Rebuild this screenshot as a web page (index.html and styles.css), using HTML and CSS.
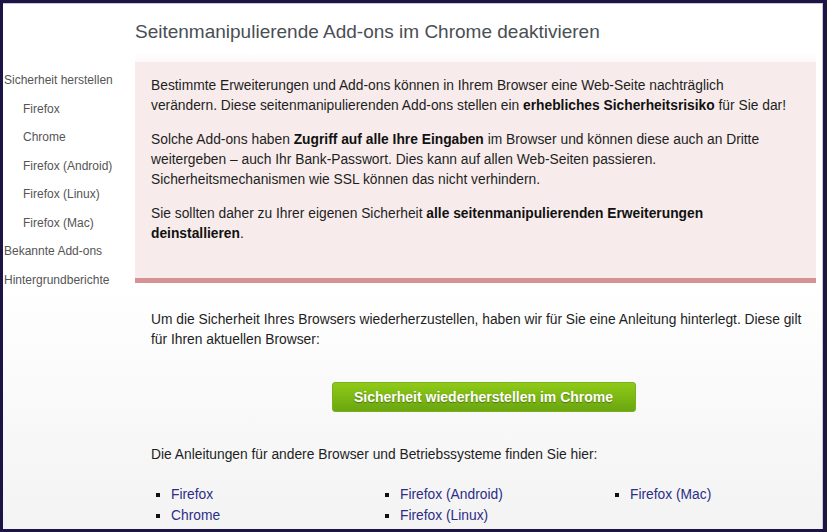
FILE: index.html
```html
<!DOCTYPE html>
<html lang="de">
<head>
<meta charset="utf-8">
<title>Seitenmanipulierende Add-ons im Chrome deaktivieren</title>
<link rel="stylesheet" href="styles.css">
</head>
<body>
<div class="frame">
  <nav class="sidebar">
    <a class="nav-item">Sicherheit herstellen</a>
    <a class="nav-item sub">Firefox</a>
    <a class="nav-item sub">Chrome</a>
    <a class="nav-item sub">Firefox (Android)</a>
    <a class="nav-item sub">Firefox (Linux)</a>
    <a class="nav-item sub">Firefox (Mac)</a>
    <a class="nav-item">Bekannte Add-ons</a>
    <a class="nav-item">Hintergrundberichte</a>
  </nav>
  <main class="main">
    <h1 class="title">Seitenmanipulierende Add-ons im Chrome deaktivieren</h1>
    <section class="warning">
      <p>Bestimmte Erweiterungen und Add-ons können in Ihrem Browser eine Web-Seite nachträglich verändern. Diese seitenmanipulierenden Add-ons stellen ein <b>erhebliches Sicherheitsrisiko</b> für Sie dar!</p>
      <p>Solche Add-ons haben <b>Zugriff auf alle Ihre Eingaben</b> im Browser und können diese auch an Dritte weitergeben – auch Ihr Bank-Passwort. Dies kann auf allen Web-Seiten passieren. Sicherheitsmechanismen wie SSL können das nicht verhindern.</p>
      <p>Sie sollten daher zu Ihrer eigenen Sicherheit <b>alle seitenmanipulierenden Erweiterungen deinstallieren</b>.</p>
    </section>
    <section class="restore">
      <p>Um die Sicherheit Ihres Browsers wiederherzustellen, haben wir für Sie eine Anleitung hinterlegt. Diese gilt für Ihren aktuellen Browser:</p>
      <div class="btn-row"><a class="btn">Sicherheit wiederherstellen im Chrome</a></div>
      <p class="others">Die Anleitungen für andere Browser und Betriebssysteme finden Sie hier:</p>
      <ul class="browsers">
        <li><a>Firefox</a></li>
        <li><a>Firefox (Android)</a></li>
        <li><a>Firefox (Mac)</a></li>
        <li><a>Chrome</a></li>
        <li><a>Firefox (Linux)</a></li>
      </ul>
    </section>
  </main>
</div>
</body>
</html>
```

FILE: styles.css
```css
html, body {
  margin: 0;
  padding: 0;
}
body {
  width: 827px;
  height: 532px;
  overflow: hidden;
  font-family: "Liberation Sans", Arial, Helvetica, sans-serif;
  background: #1c1446;
}
.frame {
  box-sizing: border-box;
  width: 827px;
  height: 532px;
  border: 3px solid #1c1446;
  border-right-width: 4px;
  background: linear-gradient(#ffffff 0, #ffffff 282px, #f3f3f3 100%);
  display: grid;
  grid-template-columns: 132px 1fr;
  box-shadow: inset 0 1px 0 #c9c9cf, inset -1px 0 0 #c9c9cf;
  padding-top: 1px;
  overflow: hidden;
}
.sidebar {
  display: flex;
  flex-direction: column;
  padding: 62px 0 0 1px;
}
.nav-item {
  font-size: 12px;
  line-height: 28.5px;
  color: #555555;
  white-space: nowrap;
}
.nav-item.sub {
  padding-left: 19px;
}
.main {
  padding-right: 7px;
}
.title {
  margin: 0;
  height: 58px;
  box-sizing: border-box;
  padding-top: 16px;
  font-size: 19px;
  line-height: 24px;
  font-weight: normal;
  color: #4a4e55;
  background: linear-gradient(#ffffff 0, #ffffff 48px, #fbf8f8 58px);
}
.warning {
  background: #f7eceb;
  border-bottom: 5px solid #d79393;
  padding: 14px 24px 0 16px;
  height: 221px;
  box-sizing: border-box;
}
.warning p,
.restore p {
  margin: 0 0 14px;
  font-size: 13.8px;
  line-height: 20px;
  color: #1e1e1e;
}
.warning p:last-child {
  margin-bottom: 0;
}
.warning b {
  color: #111;
}
.restore {
  padding: 27px 0 0 16px;
}
.btn-row {
  display: flex;
  justify-content: center;
  padding: 18px 0 33px;
}
.btn {
  display: block;
  width: 304px;
  height: 30px;
  box-sizing: border-box;
  border: 1px solid #78b01e;
  border-radius: 3px;
  background: linear-gradient(#8fca18, #6aa60f);
  color: #ffffff;
  font-weight: bold;
  font-size: 14px;
  line-height: 28px;
  text-align: center;
  text-shadow: 0 1px 1px rgba(0,0,0,0.35);
}
.restore p.others {
  margin-bottom: 19px;
}
.browsers {
  margin: 0;
  padding: 0 0 0 20px;
  display: grid;
  grid-template-columns: 229px 230px 150px;
  grid-template-rows: 21px 21px;
  list-style: square;
}
.browsers li {
  font-size: 13.8px;
  line-height: 21px;
  color: #111;
}
.browsers li:nth-child(4) {
  grid-column: 1;
  grid-row: 2;
}
.browsers li:nth-child(5) {
  grid-column: 2;
  grid-row: 2;
}
.browsers a {
  color: #2d2d86;
}
```
